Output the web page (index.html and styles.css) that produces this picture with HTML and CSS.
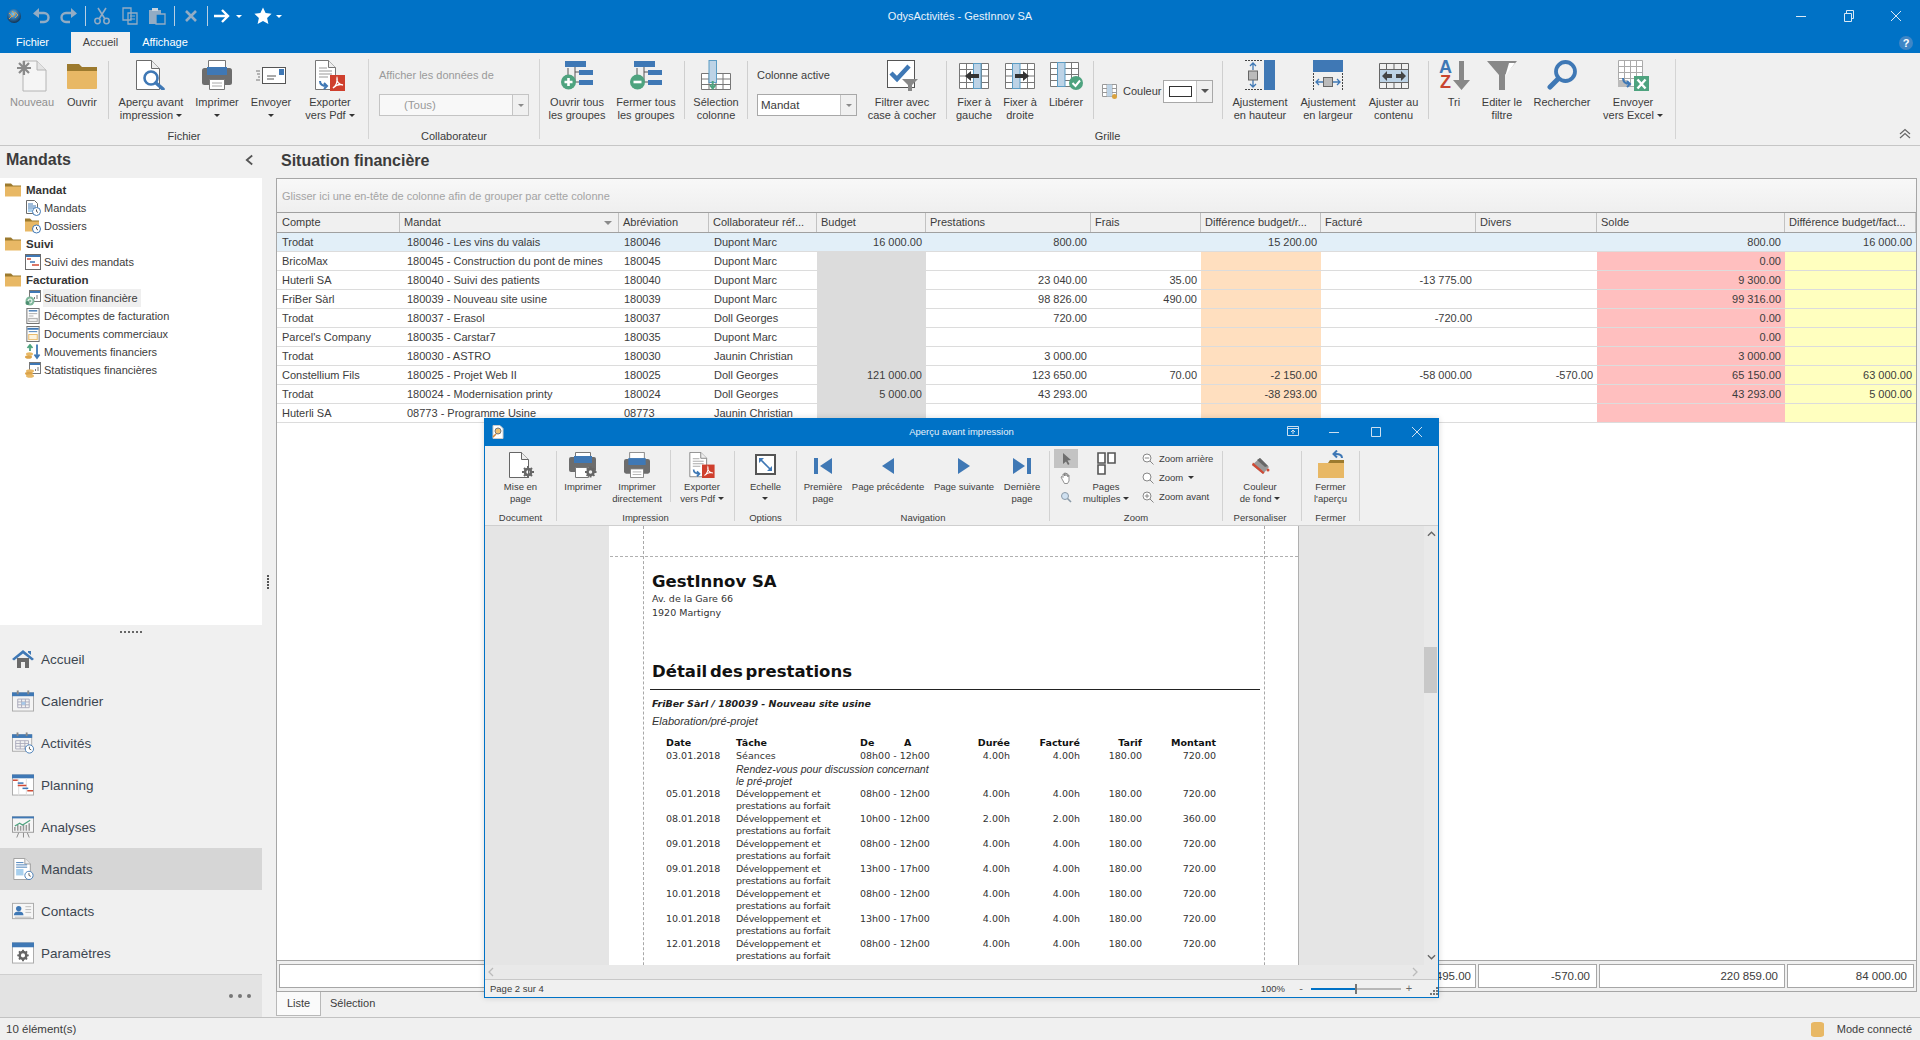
FILE: index.html
```html
<!DOCTYPE html>
<html lang="fr">
<head>
<meta charset="utf-8">
<title>OdysActivités - GestInnov SA</title>
<link rel="stylesheet" href="styles.css">
</head>
<body>
<svg class="sprite" xmlns="http://www.w3.org/2000/svg">
  <defs>
    <radialGradient id="globe" cx="45%" cy="35%" r="65%"><stop offset="0" stop-color="#7fc7ee"/><stop offset=".55" stop-color="#2a6fa8"/><stop offset="1" stop-color="#16324f"/></radialGradient>
  </defs>
  <symbol id="new" viewBox="0 0 30 32"><path d="M6 8V1h14l9 9v21H6z" fill="#f5f5f5" stroke="#b4b4b4"/><path d="M20 1v9h9" fill="#e4e4e4" stroke="#b4b4b4"/><path d="M7 1v14M0 8h14M2 3l10 10M12 3L2 13" stroke="#8a8a8a" stroke-width="2.2"/></symbol>
  <symbol id="folder" viewBox="0 0 30 26"><path d="M0 1h12l3 3h15v7H0z" fill="#9c7a2e"/><path d="M0 8h30v17a1 1 0 0 1-1 1H1a1 1 0 0 1-1-1z" fill="#e8b865"/></symbol>
  <symbol id="preview" viewBox="0 0 30 30"><path d="M.5.5h15l8 8v21H.5z" fill="#fff" stroke="#6b6b6b"/><path d="M15.5.5v8h8" fill="#eee" stroke="#6b6b6b"/><circle cx="15" cy="18" r="6.5" fill="#fff" stroke="#3f78b5" stroke-width="2.6"/><path d="M20 23l7 6" stroke="#3f78b5" stroke-width="3.6" stroke-linecap="round"/></symbol>
  <symbol id="printer" viewBox="0 0 30 30"><path d="M6.500.500h17v8h-17z" fill="#fff" stroke="#777"/><rect y="8" width="30" height="17" rx="2.500" fill="#6d6d6d"/><rect x="5" y="7" width="20" height="8" fill="#3f78b5"/><path d="M7.500 19.500h15v10h-15z" fill="#fff" stroke="#777"/><path d="M10 23h10M10 26h10" stroke="#aaa"/></symbol>
  <symbol id="send" viewBox="0 0 30 18"><path d="M0 4h4M1 7h3M2 10h2M0 13h4" stroke="#777"/><rect x="6.500" y=".5" width="23" height="16" fill="#fff" stroke="#555"/><rect x="23" y="2" width="5" height="6" fill="#3f78b5"/><path d="M11 9h9M11 12h7" stroke="#555"/></symbol>
  <symbol id="pdf" viewBox="0 0 30 31"><path d="M.5.5h13l7 7v22H.5z" fill="#fff" stroke="#777"/><path d="M13.500.5v7h7" fill="#eee" stroke="#777"/><path d="M4 8h8M4 11h13M4 14h13M4 17h9" stroke="#999"/><rect x="15" y="15" width="15" height="16" fill="#cf3f2d"/><path d="M18 28c3-2 5-7 4-10-1 3 2 7 6 7-3-1-7 0-10 3z" fill="none" stroke="#fff" stroke-width="1.300"/><path d="M5 21c0 4 3 5 7 5m-3-3l3 3-3 3" fill="none" stroke="#3f78b5" stroke-width="2"/></symbol>
  <symbol id="openall" viewBox="0 0 32 30"><path d="M7 8v8M14 6v16M14 12h4M14 22h4" stroke="#555" fill="none"/><rect x="4" y="1" width="21" height="6" fill="#3f78b5"/><rect x="18" y="10" width="14" height="5" fill="#3f78b5"/><rect x="18" y="20" width="14" height="5" fill="#3f78b5"/><circle cx="7.500" cy="22" r="7.500" fill="#4ea37f"/><path d="M7.500 18v8M3.500 22h8" stroke="#fff" stroke-width="2.600"/></symbol>
  <symbol id="closeall" viewBox="0 0 32 30"><path d="M7 8v8M14 6v16M14 12h4M14 22h4" stroke="#555" fill="none"/><rect x="4" y="1" width="21" height="6" fill="#3f78b5"/><rect x="18" y="10" width="14" height="5" fill="#3f78b5"/><rect x="18" y="20" width="14" height="5" fill="#3f78b5"/><circle cx="7.500" cy="22" r="7.500" fill="#4ea37f"/><path d="M3.500 22h8" stroke="#fff" stroke-width="2.600"/></symbol>
  <symbol id="selcol" viewBox="0 0 30 30"><path d="M.5 13.500h29v16H.5zM.5 19h29M.5 24.500h29M8 13.500v16M15 13.500v16M22 13.500v16" fill="#fff" stroke="#777"/><rect x="8" y=".5" width="7.500" height="22" fill="#bdd3e6" stroke="#5b9cc4"/><path d="M11.700 21v7M9 25l2.700 3.500L14.500 25" stroke="#4ea37f" stroke-width="2" fill="none"/></symbol>
  <symbol id="filtercheck" viewBox="0 0 31 31"><rect x=".5" y=".5" width="27" height="27" fill="#fff" stroke="#555"/><path d="M4 13l6 6L22 6" fill="none" stroke="#3f78b5" stroke-width="4.500"/><path d="M15 19h16l-6 6v6h-4v-6z" fill="#888"/></symbol>
  <symbol id="fixl" viewBox="0 0 30 26"><path d="M.5.5h29v25H.5zM.5 6.500h29M.5 13h29M.5 19.500h29M7.500.5v25M22.500.5v25" fill="#fff" stroke="#777"/><rect x="14.500" y=".5" width="7.500" height="25" fill="#bdd3e6" stroke="#5b9cc4"/><path d="M6 13l6-5v3h8v4h-8v3z" fill="#333"/></symbol>
  <symbol id="fixr" viewBox="0 0 30 26"><path d="M.5.5h29v25H.5zM.5 6.500h29M.5 13h29M.5 19.500h29M7.500.5v25M22.500.5v25" fill="#fff" stroke="#777"/><rect x="7.500" y=".5" width="7.500" height="25" fill="#bdd3e6" stroke="#5b9cc4"/><path d="M24 13l-6-5v3h-8v4h8v3z" fill="#333"/></symbol>
  <symbol id="free" viewBox="0 0 33 28"><path d="M.5.5h28v24H.5zM.5 6.500h28M.5 12.500h28M.5 18.500h28M7.500.5v24M21.500.5v24" fill="#fff" stroke="#777"/><rect x="7.500" y=".5" width="7.500" height="24" fill="#bdd3e6" stroke="#5b9cc4"/><circle cx="26" cy="21" r="7" fill="#4ea37f"/><path d="M22.500 21l3 3 4.500-5.500" fill="none" stroke="#fff" stroke-width="2"/></symbol>
  <symbol id="gridcolor" viewBox="0 0 16 15"><path d="M.5.5h14v12H.5zM.5 4.500h14M.5 8.500h14M5 .5v12M10 .5v12" fill="#fff" stroke="#999"/><rect x="5" y=".5" width="5" height="12" fill="#bdd3e6"/><circle cx="12.500" cy="12.500" r="2.500" fill="#d9a23f"/></symbol>
  <symbol id="fith" viewBox="0 0 30 30"><path d="M0 .5h18M0 29.500h18" stroke="#444" stroke-dasharray="2 1"/><path d="M8 3v7M5 6l3-3 3 3M8 20v7M5 24l3 3 3-3" stroke="#3f78b5" fill="none" stroke-width="1.300"/><rect x="3.500" y="11" width="9" height="9" fill="#bbb" stroke="#666"/><rect x="19" width="11" height="30" fill="#3f78b5"/></symbol>
  <symbol id="fitw" viewBox="0 0 30 30"><rect width="30" height="12" fill="#3f78b5"/><path d="M.5 13v17M29.500 13v17" stroke="#444" stroke-dasharray="2 1"/><path d="M3 22h7M6 19l-3 3 3 3M20 22h7M24 19l3 3-3 3" stroke="#3f78b5" fill="none" stroke-width="1.300"/><rect x="10.500" y="17.500" width="9" height="9" fill="#bbb" stroke="#666"/></symbol>
  <symbol id="fitc" viewBox="0 0 30 26"><rect y="6" width="30" height="14" fill="#bdd3e6"/><path d="M.5.5h29v25H.5zM.5 6.500h29M.5 19.500h29M7.500.5v6M15 .5v6M22.500.5v6M7.500 19.500v6M15 19.500v6M22.500 19.500v6" fill="none" stroke="#666"/><path d="M3 13l5-5v3h5v4H8v3zM27 13l-5-5v3h-5v4h5v3z" fill="#444"/></symbol>
  <symbol id="sortarrow" viewBox="0 0 17 31"><path d="M6 1h5v19h6L8.500 30 0 20h6z" fill="#888"/></symbol>
  <symbol id="funnel" viewBox="0 0 30 30"><path d="M0 1h30L18 15v15h-6V15z" fill="#888"/><path d="M19 15L28 3h-6l-3.500 12z" fill="#fff"/></symbol>
  <symbol id="search" viewBox="0 0 30 30"><circle cx="18.500" cy="11.500" r="9.500" fill="none" stroke="#3f78b5" stroke-width="3.800"/><path d="M11 19L3 27" stroke="#3f78b5" stroke-width="5" stroke-linecap="round"/></symbol>
  <symbol id="excel" viewBox="0 0 31 31"><path d="M.5.5h24v26H.5zM.5 6.500h24M.5 12.500h24M.5 18.500h24M6.500.5v26M12.500.5v26M18.500.5v26" fill="#fff" stroke="#aaa"/><rect y="20" width="9" height="7" fill="#bbb"/><rect x="16" y="16" width="15" height="15" fill="#4ea37f"/><path d="M19.500 19.500l8 9M27.500 19.500l-8 9" stroke="#fff" stroke-width="2.400"/><path d="M5 18c0 4 2 6 7 6m-3-3l3 3-3 3" fill="none" stroke="#3f78b5" stroke-width="2"/></symbol>
  <symbol id="logo" viewBox="0 0 16 16"><circle cx="8" cy="8" r="7" fill="url(#globe)"/><path d="M3 5l3 3-3 3M6 3l3 3-3 3M9 4l3 3-3 3" fill="none" stroke="#e8a04a" stroke-width=".9"/></symbol>
  <symbol id="undo" viewBox="0 0 18 18"><path d="M5 6h7a4 4 0 0 1 0 9H8" fill="none" stroke="currentColor" stroke-width="2.400"/><path d="M7 1L1 6.500 7 11z" fill="currentColor"/></symbol>
  <symbol id="redo" viewBox="0 0 18 18"><path d="M13 6H6a4 4 0 0 0 0 9h4" fill="none" stroke="currentColor" stroke-width="2.400"/><path d="M11 1l6 5.500L11 11z" fill="currentColor"/></symbol>
  <symbol id="cut" viewBox="0 0 18 18"><path d="M5 1l7 11M13 1L6 12" stroke="currentColor" stroke-width="1.600"/><circle cx="4.500" cy="14" r="2.700" fill="none" stroke="currentColor" stroke-width="1.500"/><circle cx="13.500" cy="14" r="2.700" fill="none" stroke="currentColor" stroke-width="1.500"/></symbol>
  <symbol id="copy" viewBox="0 0 18 18"><path d="M2 1h8v12H2zM7 6h9v11H7z" fill="#0072c6" stroke="currentColor" stroke-width="1.300"/><path d="M9 9h5M9 12h5" stroke="currentColor"/></symbol>
  <symbol id="paste" viewBox="0 0 18 18"><path d="M1 3h12v14H1z" fill="currentColor"/><path d="M4 1h6v3H4z" fill="#c7d3de"/><path d="M8 7h9v10H8z" fill="#0072c6" stroke="currentColor" stroke-width="1.300"/></symbol>
  <symbol id="del" viewBox="0 0 18 18"><path d="M4 4l10 10M14 4L4 14" stroke="currentColor" stroke-width="2.600"/></symbol>
  <symbol id="arrow" viewBox="0 0 18 18"><path d="M1 9h13M9 3l6 6-6 6" fill="none" stroke="currentColor" stroke-width="2.400"/></symbol>
  <symbol id="star" viewBox="0 0 18 18"><path d="M9 .5l2.600 5.600 6 .7-4.500 4.100 1.300 6L9 13.900 3.600 16.900l1.300-6L.4 6.800l6-.7z" fill="currentColor"/></symbol>
  <symbol id="restore" viewBox="0 0 12 12"><path d="M1.500 3.500h7v8h-7zM3.500 3.500v-3h7v8h-2" fill="none" stroke="currentColor"/></symbol>
  <symbol id="closex" viewBox="0 0 12 12"><path d="M1 1l10 10M11 1L1 11" stroke="currentColor"/></symbol>
  <symbol id="minus" viewBox="0 0 12 12"><path d="M1 6.500h10" stroke="currentColor"/></symbol>
  <symbol id="maxi" viewBox="0 0 12 12"><path d="M1.500 1.500h9v9h-9z" fill="none" stroke="currentColor"/></symbol>
  <symbol id="pin" viewBox="0 0 12 10"><path d="M.5 .5h11v9H.5zM.5 2.500h11" fill="none" stroke="currentColor"/><path d="M6 8V4M4 6l2-2 2 2" fill="none" stroke="currentColor"/></symbol>
  <symbol id="home" viewBox="0 0 22 20"><path d="M5 9h12v10h-4v-6H9v6H5z" fill="#6a6a6a"/><path d="M0 10L11 1l11 9-2 1.500L11 4.500 2 11.500z" fill="#3f78b5"/><path d="M16 2h3v4l-3-2.500z" fill="#3f78b5"/></symbol>
  <symbol id="cal" viewBox="0 0 23 22"><rect x=".5" y="2.500" width="22" height="19" fill="#f4f4f4" stroke="#aaa"/><rect y="2" width="23" height="4" fill="#3f78b5"/><rect x="5" y="0" width="2" height="4" fill="#888"/><rect x="16" y="0" width="2" height="4" fill="#888"/><path d="M6 9h12v9H6zM6 12h12M6 15h12M10 9v9M14 9v9" fill="none" stroke="#aab"/><rect x="10" y="12" width="4" height="3" fill="#a8c8e8"/></symbol>
  <symbol id="calclock" viewBox="0 0 24 23"><rect x=".5" y="2.500" width="21" height="18" fill="#f4f4f4" stroke="#aaa"/><rect y="2" width="22" height="4" fill="#3f78b5"/><rect x="5" y="0" width="2" height="4" fill="#888"/><rect x="15" y="0" width="2" height="4" fill="#888"/><path d="M4 9h14v9H4zM4 12h14M4 15h14M9 9v9M14 9v9" fill="none" stroke="#aab"/><circle cx="19" cy="18" r="4.500" fill="#fff" stroke="#3f78b5"/><path d="M19 15.500V18l2 1" fill="none" stroke="#555"/></symbol>
  <symbol id="plan" viewBox="0 0 23 22"><rect x=".5" y=".5" width="22" height="21" fill="#fff" stroke="#aaa"/><rect width="23" height="4" fill="#3f78b5"/><path d="M7 4v18M15 4v18" stroke="#ddd"/><path d="M1 6h5" stroke="#d04a35" stroke-width="1.600"/><path d="M6 9h6" stroke="#3f78b5" stroke-width="1.600"/><path d="M6 11.500h9" stroke="#d04a35" stroke-width="1.600"/><path d="M11 14.500h6" stroke="#3f78b5" stroke-width="1.600"/><path d="M16 17h6" stroke="#d04a35" stroke-width="1.600"/></symbol>
  <symbol id="chart" viewBox="0 0 23 22"><rect x=".5" y=".5" width="22" height="16" fill="#f6f6f6" stroke="#999"/><rect width="23" height="2" fill="#3f78b5"/><path d="M3 15v-4M6 15V9M9 15V10M12 15V8M15 15V9M18 15V7" stroke="#999" stroke-width="1.600"/><path d="M3 10l5-3 3 2 8-5" fill="none" stroke="#4ea37f" stroke-width="1.300"/><path d="M7 17l-2 5M12 17v5M16 17l2 5" stroke="#888"/></symbol>
  <symbol id="mand" viewBox="0 0 23 24"><path d="M1.500 .5h12l6 6v17h-18z" fill="#fff" stroke="#999"/><path d="M13.500.5v6h6" fill="#eee" stroke="#999"/><path d="M4 5h8M4 7.500h12M4 10h12" stroke="#3f78b5"/><rect x="4" y="12" width="8" height="7" fill="#a8d0ee"/><circle cx="18" cy="19" r="4.500" fill="#fff" stroke="#3f78b5"/><path d="M18 16.500V19l2 1" fill="none" stroke="#555"/></symbol>
  <symbol id="cont" viewBox="0 0 23 17"><rect x=".5" y=".5" width="22" height="16" fill="#f6f6f6" stroke="#aaa"/><circle cx="7" cy="6" r="2.800" fill="#3f78b5"/><path d="M2 13c0-3 2-4 5-4s5 1 5 4z" fill="#3f78b5"/><path d="M14 4h6M14 7h6M14 10h6M3 15h17" stroke="#bbb"/></symbol>
  <symbol id="gear" viewBox="0 0 23 22"><rect x=".5" y=".5" width="22" height="21" fill="#fff" stroke="#aaa"/><rect width="23" height="5" fill="#3f78b5"/><circle cx="11.500" cy="13.500" r="3.500" fill="none" stroke="#666" stroke-width="2.600"/><path d="M11.500 7.500v3M11.500 16.500v3M5.500 13.500h3M14.500 13.500h3M7.300 9.300l2 2M13.700 15.700l2 2M15.700 9.300l-2 2M9.300 15.700l-2 2" stroke="#666" stroke-width="2"/></symbol>
  <symbol id="tfold" viewBox="0 0 16 13"><path d="M0 0h6l2 2h8v3H0z" fill="#9c7a2e"/><path d="M0 3h16v10H0z" fill="#e8b865"/></symbol>
  <symbol id="tfoldc" viewBox="0 0 16 15"><path d="M0 0h5l2 2h7v3H0z" fill="#9c7a2e"/><path d="M0 3h14v10H0z" fill="#e8b865"/><circle cx="11.500" cy="10.500" r="4" fill="#fff" stroke="#3f78b5"/><path d="M11.500 8.500v2l1.500 1" fill="none" stroke="#555"/></symbol>
  <symbol id="tmand" viewBox="0 0 16 16"><path d="M1.500 .5h8l3 3v10h-11z" fill="#fff" stroke="#6b6b6b"/><path d="M3 4h5M3 6h8M3 8h8" stroke="#3f78b5"/><rect x="3" y="9" width="4" height="3" fill="#a8d0ee"/><circle cx="11.500" cy="11.500" r="4" fill="#fff" stroke="#3f78b5"/><path d="M11.500 9.500v2l1.500 1" fill="none" stroke="#555"/></symbol>
  <symbol id="tsuivi" viewBox="0 0 16 16"><rect x=".5" y=".5" width="15" height="15" fill="#fff" stroke="#6b6b6b"/><rect x="1" y="1" width="14" height="2" fill="#3f78b5"/><path d="M2 5h4" stroke="#d04a35" stroke-width="1.500"/><path d="M5 8h5" stroke="#3f78b5" stroke-width="1.500"/><path d="M7 11h7" stroke="#d04a35" stroke-width="1.500"/></symbol>
  <symbol id="tsit" viewBox="0 0 16 16"><rect x="4.500" y=".5" width="11" height="11" fill="#fff" stroke="#777"/><rect x="5" y="1" width="10" height="2" fill="#3f78b5"/><path d="M12 9V5M9.500 9V7" stroke="#777"/><circle cx="5" cy="11" r="4.500" fill="#7fb89c"/><circle cx="5" cy="11" r="2" fill="none" stroke="#fff"/><circle cx="2.500" cy="13" r="2" fill="#4e8f72"/></symbol>
  <symbol id="tdec" viewBox="0 0 16 17"><rect x="1.500" y=".5" width="13" height="16" fill="#fff" stroke="#6b6b6b"/><path d="M3.500 3h9" stroke="#3f78b5" stroke-width="1.500"/><path d="M3.500 6h9M3.500 8.500h5" stroke="#aaa"/><rect x="3.500" y="11" width="9" height="3.500" fill="#eee" stroke="#aaa"/></symbol>
  <symbol id="tdoc" viewBox="0 0 16 17"><rect x="1.500" y=".5" width="13" height="16" fill="#fff" stroke="#6b6b6b"/><rect x="2" y="2" width="12" height="2" fill="#3f78b5"/><path d="M3.500 6h9" stroke="#3f78b5"/><rect x="3.500" y="9" width="9" height="5.500" fill="#fdf3de" stroke="#e8b865"/></symbol>
  <symbol id="tmouv" viewBox="0 0 16 16"><path d="M5 7V2M2.500 4L5 1l2.500 3" fill="none" stroke="#4ea37f" stroke-width="1.800"/><path d="M12 .5V13M9.500 10.500L12 14l2.500-3.500" fill="none" stroke="#3f78b5" stroke-width="1.800"/><ellipse cx="4.500" cy="10" rx="3.500" ry="1.800" fill="#e8b865"/><ellipse cx="3.500" cy="13" rx="3.500" ry="1.800" fill="#dca44a"/></symbol>
  <symbol id="tstat" viewBox="0 0 16 16"><rect x="4.500" y=".5" width="11" height="11" fill="#fff" stroke="#777"/><rect x="5" y="1" width="10" height="2" fill="#3f78b5"/><path d="M13 9V5M10.500 9V7" stroke="#777"/><ellipse cx="5" cy="9" rx="4" ry="1.800" fill="#e8b865"/><ellipse cx="4" cy="11.500" rx="4" ry="1.800" fill="#dca44a"/><ellipse cx="5" cy="14" rx="4" ry="1.800" fill="#e8b865"/></symbol>
  <symbol id="pagesetup" viewBox="0 0 26 26"><path d="M1.500 .5h12l7 7v18h-19z" fill="#fff" stroke="#666"/><path d="M13.500 .5v7h7" fill="#eee" stroke="#666"/><circle cx="20" cy="20" r="3" fill="none" stroke="#666" stroke-width="2.600"/><path d="M20 14v3M20 23v3M14 20h3M23 20h3M16 16l2 2M22 22l2 2M24 16l-2 2M18 22l-2 2" stroke="#666" stroke-width="2"/></symbol>
  <symbol id="printgear" viewBox="0 0 28 26"><path d="M6.500 .5h15v6h-15z" fill="#fff" stroke="#777"/><rect y="5" width="27" height="15" rx="2" fill="#6d6d6d"/><rect x="5" y="4" width="18" height="7" fill="#3f78b5"/><path d="M6.500 15.500h13v10h-13z" fill="#fff" stroke="#777"/><circle cx="21.500" cy="20" r="3" fill="#f0f0f0" stroke="#666" stroke-width="2.500"/><path d="M21.500 14.500v2.500M21.500 23v2.500M16 20h2.500M25 20h2.500M17.800 16.300l1.800 1.800M23.600 22.100l1.800 1.800M25.200 16.300l-1.800 1.800M19.400 22.100l-1.800 1.800" stroke="#666" stroke-width="2"/></symbol>
  <symbol id="scale" viewBox="0 0 21 21"><rect x="1" y="1" width="19" height="19" fill="#fff" stroke="#555" stroke-width="2"/><path d="M5 5l11 11" stroke="#3f78b5" stroke-width="1.600"/><path d="M4 9V4h5zM17 12v5h-5z" fill="#3f78b5"/></symbol>
  <symbol id="first" viewBox="0 0 18 16"><rect width="4" height="16" fill="#3f78b5"/><path d="M18 0v16L6 8z" fill="#3f78b5"/></symbol>
  <symbol id="prev" viewBox="0 0 12 16"><path d="M12 0v16L0 8z" fill="#3f78b5"/></symbol>
  <symbol id="next" viewBox="0 0 12 16"><path d="M0 0v16l12-8z" fill="#3f78b5"/></symbol>
  <symbol id="last" viewBox="0 0 18 16"><rect x="14" width="4" height="16" fill="#3f78b5"/><path d="M0 0v16l12-8z" fill="#3f78b5"/></symbol>
  <symbol id="cursor" viewBox="0 0 12 12"><path d="M3 0v11l3-2.500 2 3.500 1.500-1L7.500 7.500 11 7z" fill="#6e6e6e"/></symbol>
  <symbol id="hand" viewBox="0 0 12 12"><path d="M2 7L1 5l1-.5 1 1V2l1 0 .5 2V1l1.200 0 .3 3V1.500h1.200L8 5V3l1 0v6l-1.500 2.500h-3z" fill="#fff" stroke="#777" stroke-width=".8"/></symbol>
  <symbol id="mag" viewBox="0 0 12 12"><circle cx="5" cy="5" r="3.500" fill="#cfe0f0" stroke="#8a9aa8"/><path d="M7.500 7.500L11 11" stroke="#8a9aa8" stroke-width="1.600"/></symbol>
  <symbol id="pages" viewBox="0 0 19 23"><path d="M1 1h7v10H1zM11 1h7v10h-7zM1 13h7v9H1z" fill="#fff" stroke="#555" stroke-width="1.600"/></symbol>
  <symbol id="zout" viewBox="0 0 12 12"><circle cx="5" cy="5" r="4" fill="#fff" stroke="#888"/><path d="M2.800 5h4.400M8 8l3.500 3.500" stroke="#888"/></symbol>
  <symbol id="zo" viewBox="0 0 12 12"><circle cx="5" cy="5" r="4" fill="#fff" stroke="#888"/><path d="M8 8l3.500 3.500" stroke="#888"/></symbol>
  <symbol id="zin" viewBox="0 0 12 12"><circle cx="5" cy="5" r="4" fill="#fff" stroke="#888"/><path d="M2.800 5h4.400M5 2.800v4.400M8 8l3.500 3.500" stroke="#888"/></symbol>
  <symbol id="bucket" viewBox="0 0 20 18"><path d="M10 1l9 9-6 7-11-9z" fill="#999"/><path d="M2 8l11 9 1.500-1.500L3 5.500z" fill="#d04a35"/><path d="M10 1l8 8-3 1-8-7z" fill="#666"/><circle cx="18" cy="13" r="1.500" fill="#d04a35"/></symbol>
  <symbol id="closeprev" viewBox="0 0 26 28"><path d="M0 13h10l2-3h14v4H0z" fill="#9c7a2e"/><path d="M0 13h26v15H0z" fill="#e8b865"/><path d="M24 8c0-3-3-4-6-4h-2M19 .5L15.500 4l3.500 3.500" fill="none" stroke="#3f78b5" stroke-width="2"/></symbol>
  <symbol id="dlgicon" viewBox="0 0 12 14"><path d="M1 .5h7l3 3v10H1z" fill="#fff" stroke="#ccc"/><circle cx="6" cy="6" r="3" fill="#f0c070" stroke="#777"/><path d="M4 9l-3 3" stroke="#d88a3a" stroke-width="1.600"/></symbol>
  <symbol id="db" viewBox="0 0 13 15"><path d="M0 2c0-3 13-3 13 0v11c0 3-13 3-13 0z" fill="#e8b865"/></symbol>
</svg>

<div class="app">
  <header class="titlebar">
    <div class="qrow">
      <div class="qat">
        <span class="q w19"><svg class="s14"><use href="#logo"/></svg></span>
        <span class="q w28 ml4 dim"><svg class="s18"><use href="#undo"/></svg></span>
        <span class="q w28 dim"><svg class="s18"><use href="#redo"/></svg></span>
        <i class="qsep"></i>
        <span class="q w32 dim"><svg class="s18"><use href="#cut"/></svg></span>
        <span class="q w24 dim"><svg class="s18"><use href="#copy"/></svg></span>
        <span class="q w30 dim"><svg class="s18"><use href="#paste"/></svg></span>
        <i class="qsep"></i>
        <span class="q w32 dim"><svg class="s18"><use href="#del"/></svg></span>
        <i class="qsep flat"></i>
        <span class="q w28 lit"><svg class="s18"><use href="#arrow"/></svg></span>
        <i class="caret white"></i>
        <span class="q w26 ml8 lit"><svg class="s18"><use href="#star"/></svg></span>
        <i class="caret white"></i>
      </div>
      <div class="apptitle">OdysActivités - GestInnov SA</div>
      <div class="winbtns">
        <span class="wb"><svg class="s12"><use href="#minus"/></svg></span>
        <span class="wb"><svg class="s12"><use href="#restore"/></svg></span>
        <span class="wb"><svg class="s12"><use href="#closex"/></svg></span>
      </div>
    </div>
    <div class="tabs">
      <span class="tab t-file">Fichier</span>
      <span class="tab t-on">Accueil</span>
      <span class="tab t-view">Affichage</span>
      <span class="help">?</span>
    </div>
  </header>

  <section class="ribbon">
    <div class="group g368">
      <div class="gbody pl8">
        <div class="rb w48 off"><div class="ic"><svg class="i30x32"><use href="#new"/></svg></div><div class="lb">Nouveau</div></div>
        <div class="rb w52"><div class="ic"><svg class="i30x26 mt3"><use href="#folder"/></svg></div><div class="lb">Ouvrir</div></div>
        <i class="sep"></i>
        <div class="rb w84"><div class="ic"><svg class="i30"><use href="#preview"/></svg></div><div class="lb">Aperçu avant<br>impression <i class="caret"></i></div></div>
        <div class="rb w48"><div class="ic"><svg class="i30"><use href="#printer"/></svg></div><div class="lb">Imprimer<br><i class="caret"></i></div></div>
        <div class="rb w60"><div class="ic"><svg class="i30x18 mt7"><use href="#send"/></svg></div><div class="lb">Envoyer<br><i class="caret"></i></div></div>
        <div class="rb w58"><div class="ic"><svg class="i30x31"><use href="#pdf"/></svg></div><div class="lb">Exporter<br>vers Pdf <i class="caret"></i></div></div>
      </div>
      <div class="glabel">Fichier</div>
    </div>
    <i class="gsep"></i>
    <div class="group g170">
      <div class="gbody col pad10">
        <div class="muted fieldcap">Afficher les données de</div>
        <div class="combo cb150 dis"><span class="cbtxt ind">(Tous)</span><span class="cbbtn"><i class="caret gray"></i></span></div>
      </div>
      <div class="glabel">Collaborateur</div>
    </div>
    <i class="gsep"></i>
    <div class="group g1135">
      <div class="gbody">
        <div class="rb w74"><div class="ic"><svg class="i32x30"><use href="#openall"/></svg></div><div class="lb">Ouvrir tous<br>les groupes</div></div>
        <div class="rb w64"><div class="ic"><svg class="i32x30"><use href="#closeall"/></svg></div><div class="lb">Fermer tous<br>les groupes</div></div>
        <i class="sep ml6"></i>
        <div class="rb w62"><div class="ic"><svg class="i30"><use href="#selcol"/></svg></div><div class="lb">Sélection<br>colonne</div></div>
        <i class="sep"></i>
        <div class="col w110 pad9">
          <div class="fieldcap">Colonne active</div>
          <div class="combo cb100"><span class="cbtxt">Mandat</span><span class="cbbtn"><i class="caret gray"></i></span></div>
        </div>
        <div class="rb w88"><div class="ic"><svg class="i31"><use href="#filtercheck"/></svg></div><div class="lb">Filtrer avec<br>case à cocher</div></div>
        <i class="sep"></i>
        <div class="rb w54"><div class="ic"><svg class="i30x26 mt3"><use href="#fixl"/></svg></div><div class="lb">Fixer à<br>gauche</div></div>
        <div class="rb w38"><div class="ic"><svg class="i30x26 mt3"><use href="#fixr"/></svg></div><div class="lb">Fixer à<br>droite</div></div>
        <div class="rb w54"><div class="ic"><svg class="i33x28 mt2"><use href="#free"/></svg></div><div class="lb">Libérer</div></div>
        <i class="sep"></i>
        <div class="colorbox w128">
          <svg class="i16x15"><use href="#gridcolor"/></svg>
          <span class="colorlb">Couleur</span>
          <span class="combo cbcol"><span class="swatch"><i></i></span><span class="cbbtn"><i class="caret dark"></i></span></span>
        </div>
        <i class="sep"></i>
        <div class="rb w74"><div class="ic"><svg class="i30"><use href="#fith"/></svg></div><div class="lb">Ajustement<br>en hauteur</div></div>
        <div class="rb w62"><div class="ic"><svg class="i30"><use href="#fitw"/></svg></div><div class="lb">Ajustement<br>en largeur</div></div>
        <div class="rb w69"><div class="ic"><svg class="i30x26 mt3"><use href="#fitc"/></svg></div><div class="lb">Ajuster au<br>contenu</div></div>
        <i class="sep"></i>
        <div class="rb w50"><div class="ic az"><span class="azl"><b class="az-a">A</b><b class="az-z">Z</b></span><svg class="i17x31"><use href="#sortarrow"/></svg></div><div class="lb">Tri</div></div>
        <div class="rb w46"><div class="ic"><svg class="i30"><use href="#funnel"/></svg></div><div class="lb">Editer le<br>filtre</div></div>
        <div class="rb w74"><div class="ic"><svg class="i30"><use href="#search"/></svg></div><div class="lb">Rechercher</div></div>
        <div class="rb w68"><div class="ic"><svg class="i31"><use href="#excel"/></svg></div><div class="lb">Envoyer<br>vers Excel <i class="caret"></i></div></div>
      </div>
      <div class="glabel">Grille</div>
    </div>
    <i class="gsep"></i>
    <div class="collapse"><svg class="s12" viewBox="0 0 12 12"><path d="M1 6l5-4.500L11 6M1 10l5-4.500L11 10" fill="none" stroke="#666" stroke-width="1.200"/></svg></div>
  </section>

  <main class="main">
    <aside class="left">
      <div class="paneltitle lefthead"><span>Mandats</span><svg class="chev" viewBox="0 0 10 12"><path d="M8 1L2 6l6 5" fill="none" stroke="#555" stroke-width="2"/></svg></div>
      <nav class="tree">
        <div class="tg"><svg class="t16"><use href="#tfold"/></svg>Mandat</div>
        <div class="ti"><svg class="t16"><use href="#tmand"/></svg><span>Mandats</span></div>
        <div class="ti"><svg class="t16"><use href="#tfoldc"/></svg><span>Dossiers</span></div>
        <div class="tg"><svg class="t16"><use href="#tfold"/></svg>Suivi</div>
        <div class="ti"><svg class="t16"><use href="#tsuivi"/></svg><span>Suivi des mandats</span></div>
        <div class="tg"><svg class="t16"><use href="#tfold"/></svg>Facturation</div>
        <div class="ti sel"><svg class="t16"><use href="#tsit"/></svg><span>Situation financière</span></div>
        <div class="ti"><svg class="t16"><use href="#tdec"/></svg><span>Décomptes de facturation</span></div>
        <div class="ti"><svg class="t16"><use href="#tdoc"/></svg><span>Documents commerciaux</span></div>
        <div class="ti"><svg class="t16"><use href="#tmouv"/></svg><span>Mouvements financiers</span></div>
        <div class="ti"><svg class="t16"><use href="#tstat"/></svg><span>Statistiques financières</span></div>
      </nav>
      <div class="grip"><i></i><i></i><i></i><i></i><i></i><i></i></div>
      <div class="navitem"><svg class="n22"><use href="#home"/></svg><span>Accueil</span></div>
      <div class="navitem"><svg class="n22"><use href="#cal"/></svg><span>Calendrier</span></div>
      <div class="navitem"><svg class="n22"><use href="#calclock"/></svg><span>Activités</span></div>
      <div class="navitem"><svg class="n22"><use href="#plan"/></svg><span>Planning</span></div>
      <div class="navitem"><svg class="n22"><use href="#chart"/></svg><span>Analyses</span></div>
      <div class="navitem on"><svg class="n22"><use href="#mand"/></svg><span>Mandats</span></div>
      <div class="navitem"><svg class="n22"><use href="#cont"/></svg><span>Contacts</span></div>
      <div class="navitem"><svg class="n22"><use href="#gear"/></svg><span>Paramètres</span></div>
      <div class="navmore"><i></i><i></i><i></i></div>
    </aside>
    <div class="split"><i></i><i></i><i></i><i></i><i></i></div>
    <section class="content">
      <div class="paneltitle"><span>Situation financière</span></div>
      <div class="panel">
        <div class="grouppane">Glisser ici une en-tête de colonne afin de grouper par cette colonne</div>
        <div class="row head">
          <span class="c first">Compte</span><span class="c sorted">Mandat<i class="caret gray big"></i></span><span class="c">Abréviation</span><span class="c">Collaborateur réf...</span><span class="c">Budget</span><span class="c">Prestations</span><span class="c">Frais</span><span class="c">Différence budget/r...</span><span class="c">Facturé</span><span class="c">Divers</span><span class="c">Solde</span><span class="c">Différence budget/fact...</span>
        </div>
        <div class="rows">
          <div class="row r selrow"><span class="t">Trodat</span><span class="t m">180046 - Les vins du valais</span><span class="t">180046</span><span class="t">Dupont Marc</span><span class="n">16 000.00</span><span class="n">800.00</span><span class="n"></span><span class="n">15 200.00</span><span class="n"></span><span class="n"></span><span class="n">800.00</span><span class="n">16 000.00</span></div>
          <div class="row r"><span class="t">BricoMax</span><span class="t m">180045 - Construction du pont de mines</span><span class="t">180045</span><span class="t">Dupont Marc</span><span class="n bg"></span><span class="n"></span><span class="n"></span><span class="n ob"></span><span class="n"></span><span class="n"></span><span class="n rd">0.00</span><span class="n yl"></span></div>
          <div class="row r"><span class="t">Huterli SA</span><span class="t m">180040 - Suivi des patients</span><span class="t">180040</span><span class="t">Dupont Marc</span><span class="n bg"></span><span class="n">23 040.00</span><span class="n">35.00</span><span class="n ob"></span><span class="n">-13 775.00</span><span class="n"></span><span class="n rd">9 300.00</span><span class="n yl"></span></div>
          <div class="row r"><span class="t">FriBer Sàrl</span><span class="t m">180039 - Nouveau site usine</span><span class="t">180039</span><span class="t">Dupont Marc</span><span class="n bg"></span><span class="n">98 826.00</span><span class="n">490.00</span><span class="n ob"></span><span class="n"></span><span class="n"></span><span class="n rd">99 316.00</span><span class="n yl"></span></div>
          <div class="row r"><span class="t">Trodat</span><span class="t m">180037 - Erasol</span><span class="t">180037</span><span class="t">Doll Georges</span><span class="n bg"></span><span class="n">720.00</span><span class="n"></span><span class="n ob"></span><span class="n">-720.00</span><span class="n"></span><span class="n rd">0.00</span><span class="n yl"></span></div>
          <div class="row r"><span class="t">Parcel's Company</span><span class="t m">180035 - Carstar7</span><span class="t">180035</span><span class="t">Dupont Marc</span><span class="n bg"></span><span class="n"></span><span class="n"></span><span class="n ob"></span><span class="n"></span><span class="n"></span><span class="n rd">0.00</span><span class="n yl"></span></div>
          <div class="row r"><span class="t">Trodat</span><span class="t m">180030 - ASTRO</span><span class="t">180030</span><span class="t">Jaunin Christian</span><span class="n bg"></span><span class="n">3 000.00</span><span class="n"></span><span class="n ob"></span><span class="n"></span><span class="n"></span><span class="n rd">3 000.00</span><span class="n yl"></span></div>
          <div class="row r"><span class="t">Constellium Fils</span><span class="t m">180025 - Projet Web II</span><span class="t">180025</span><span class="t">Doll Georges</span><span class="n bg">121 000.00</span><span class="n">123 650.00</span><span class="n">70.00</span><span class="n ob">-2 150.00</span><span class="n">-58 000.00</span><span class="n">-570.00</span><span class="n rd">65 150.00</span><span class="n yl">63 000.00</span></div>
          <div class="row r"><span class="t">Trodat</span><span class="t m">180024 - Modernisation printy</span><span class="t">180024</span><span class="t">Doll Georges</span><span class="n bg">5 000.00</span><span class="n">43 293.00</span><span class="n"></span><span class="n ob">-38 293.00</span><span class="n"></span><span class="n"></span><span class="n rd">43 293.00</span><span class="n yl">5 000.00</span></div>
          <div class="row r"><span class="t">Huterli SA</span><span class="t m">08773 - Programme Usine</span><span class="t">08773</span><span class="t">Jaunin Christian</span><span class="n bg"></span><span class="n"></span><span class="n"></span><span class="n ob"></span><span class="n"></span><span class="n"></span><span class="n rd"></span><span class="n yl"></span></div>
        </div>
        <div class="row foot">
          <span class="fc spanleft"></span><span class="fc tight">-72 495.00</span><span class="fc">-570.00</span><span class="fc">220 859.00</span><span class="fc lastf">84 000.00</span>
        </div>
      </div>
      <div class="bottomtabs"><span class="btab on">Liste</span><span class="btab">Sélection</span></div>
    </section>
  </main>

  <footer class="status">
    <span>10 élément(s)</span>
    <span class="connected"><svg class="db"><use href="#db"/></svg>Mode connecté</span>
  </footer>
</div>

<div class="dialog">
  <div class="dtitle">
    <div class="dtl"><svg class="dico"><use href="#dlgicon"/></svg></div>
    <div class="dname">Aperçu avant impression</div>
    <div class="dtr">
      <span class="dwb"><svg class="pinic"><use href="#pin"/></svg></span>
      <span class="dwb"><svg class="s12"><use href="#minus"/></svg></span>
      <span class="dwb"><svg class="s12"><use href="#maxi"/></svg></span>
      <span class="dwb"><svg class="s12"><use href="#closex"/></svg></span>
    </div>
  </div>
  <div class="dribbon">
    <div class="dg d71"><div class="dbody">
      <div class="db1 w71"><div class="dic"><svg class="i26"><use href="#pagesetup"/></svg></div><div class="dl">Mise en<br>page</div></div>
    </div><div class="dlabel">Document</div></div>
    <i class="dsep"></i>
    <div class="dg d177"><div class="dbody">
      <div class="db1 w52"><div class="dic"><svg class="i28x26"><use href="#printgear"/></svg></div><div class="dl">Imprimer</div></div>
      <div class="db1 w56"><div class="dic"><svg class="i28x26"><use href="#printer"/></svg></div><div class="dl">Imprimer<br>directement</div></div>
      <i class="dsub"></i>
      <div class="db1 w62"><div class="dic"><svg class="i28x26"><use href="#pdf"/></svg></div><div class="dl">Exporter<br>vers Pdf <i class="caret"></i></div></div>
    </div><div class="dlabel">Impression</div></div>
    <i class="dsep"></i>
    <div class="dg d61"><div class="dbody">
      <div class="db1 w61"><div class="dic"><svg class="i21 mt2"><use href="#scale"/></svg></div><div class="dl">Echelle<br><i class="caret"></i></div></div>
    </div><div class="dlabel">Options</div></div>
    <i class="dsep"></i>
    <div class="dg d252"><div class="dbody">
      <div class="db1 w52"><div class="dic"><svg class="i18x16 mt6"><use href="#first"/></svg></div><div class="dl">Première<br>page</div></div>
      <div class="db1 w78"><div class="dic"><svg class="i12x16 mt6"><use href="#prev"/></svg></div><div class="dl">Page précédente</div></div>
      <div class="db1 w74"><div class="dic"><svg class="i12x16 mt6"><use href="#next"/></svg></div><div class="dl">Page suivante</div></div>
      <div class="db1 w42"><div class="dic"><svg class="i18x16 mt6"><use href="#last"/></svg></div><div class="dl">Dernière<br>page</div></div>
    </div><div class="dlabel">Navigation</div></div>
    <i class="dsep"></i>
    <div class="dg d172"><div class="dbody">
      <div class="tools">
        <span class="tool active"><svg class="s12"><use href="#cursor"/></svg></span>
        <span class="tool"><svg class="s12"><use href="#hand"/></svg></span>
        <span class="tool"><svg class="s12"><use href="#mag"/></svg></span>
      </div>
      <div class="db1 w48"><div class="dic"><svg class="i19x23"><use href="#pages"/></svg></div><div class="dl">Pages<br>multiples <i class="caret"></i></div></div>
      <div class="zooms">
        <div class="zr"><svg class="s12"><use href="#zout"/></svg>Zoom arrière</div>
        <div class="zr"><svg class="s12"><use href="#zo"/></svg>Zoom <i class="caret"></i></div>
        <div class="zr"><svg class="s12"><use href="#zin"/></svg>Zoom avant</div>
      </div>
    </div><div class="dlabel">Zoom</div></div>
    <i class="dsep"></i>
    <div class="dg d78"><div class="dbody">
      <div class="db1 w74"><div class="dic"><svg class="i20x18 mt5"><use href="#bucket"/></svg></div><div class="dl">Couleur<br>de fond <i class="caret"></i></div></div>
    </div><div class="dlabel dlp">Personaliser</div></div>
    <i class="dsep"></i>
    <div class="dg d57"><div class="dbody">
      <div class="db1 w57"><div class="dic"><svg class="i26x28 mtn2"><use href="#closeprev"/></svg></div><div class="dl">Fermer<br>l'aperçu</div></div>
    </div><div class="dlabel">Fermer</div></div>
    <i class="dsep"></i>
  </div>
  <div class="viewer">
    <div class="canvas">
      <div class="page">
        <div class="printarea">
          <div class="topmargin"></div>
          <h1 class="co">GestInnov SA</h1>
          <div class="addr">Av. de la Gare 66</div>
          <div class="addr">1920 Martigny</div>
          <h2 class="dtit">Détail des prestations</h2>
          <div class="acct">FriBer Sàrl / 180039 - Nouveau site usine</div>
          <div class="phase">Elaboration/pré-projet</div>
          <div class="lh hd"><b>Date</b><b>Tâche</b><b class="de">De</b><b class="a">A</b><b class="rt">Durée</b><b class="rt">Facturé</b><b class="rt">Tarif</b><b class="rt">Montant</b></div>
          <div class="lh"><span>03.01.2018</span><span>Séances</span><span class="tm">08h00 - 12h00</span><span class="rt">4.00h</span><span class="rt">4.00h</span><span class="rt">180.00</span><span class="rt">720.00</span></div>
          <div class="note">Rendez-vous pour discussion concernant<br>le pré-projet</div>
          <div class="lh two"><span>05.01.2018</span><span>Développement et<br>prestations au forfait</span><span class="tm">08h00 - 12h00</span><span class="rt">4.00h</span><span class="rt">4.00h</span><span class="rt">180.00</span><span class="rt">720.00</span></div>
          <div class="lh two"><span>08.01.2018</span><span>Développement et<br>prestations au forfait</span><span class="tm">10h00 - 12h00</span><span class="rt">2.00h</span><span class="rt">2.00h</span><span class="rt">180.00</span><span class="rt">360.00</span></div>
          <div class="lh two"><span>09.01.2018</span><span>Développement et<br>prestations au forfait</span><span class="tm">08h00 - 12h00</span><span class="rt">4.00h</span><span class="rt">4.00h</span><span class="rt">180.00</span><span class="rt">720.00</span></div>
          <div class="lh two"><span>09.01.2018</span><span>Développement et<br>prestations au forfait</span><span class="tm">13h00 - 17h00</span><span class="rt">4.00h</span><span class="rt">4.00h</span><span class="rt">180.00</span><span class="rt">720.00</span></div>
          <div class="lh two"><span>10.01.2018</span><span>Développement et<br>prestations au forfait</span><span class="tm">08h00 - 12h00</span><span class="rt">4.00h</span><span class="rt">4.00h</span><span class="rt">180.00</span><span class="rt">720.00</span></div>
          <div class="lh two"><span>10.01.2018</span><span>Développement et<br>prestations au forfait</span><span class="tm">13h00 - 17h00</span><span class="rt">4.00h</span><span class="rt">4.00h</span><span class="rt">180.00</span><span class="rt">720.00</span></div>
          <div class="lh two"><span>12.01.2018</span><span>Développement et<br>prestations au forfait</span><span class="tm">08h00 - 12h00</span><span class="rt">4.00h</span><span class="rt">4.00h</span><span class="rt">180.00</span><span class="rt">720.00</span></div>
        </div>
      </div>
      <div class="vscroll">
        <svg class="vchev" viewBox="0 0 10 6"><path d="M1 5l4-4 4 4" fill="none" stroke="#666" stroke-width="1.500"/></svg>
        <i class="thumb"></i>
        <svg class="vchev" viewBox="0 0 10 6"><path d="M1 1l4 4 4-4" fill="none" stroke="#666" stroke-width="1.500"/></svg>
      </div>
    </div>
    <div class="hscroll">
      <svg class="hchev" viewBox="0 0 6 10"><path d="M5 1L1 5l4 4" fill="none" stroke="#bbb" stroke-width="1.300"/></svg>
      <svg class="hchev" viewBox="0 0 6 10"><path d="M1 1l4 4-4 4" fill="none" stroke="#bbb" stroke-width="1.300"/></svg>
    </div>
  </div>
  <div class="dstatus">
    <span>Page 2 sur 4</span>
    <span class="zoomctl"><span class="pct">100%</span><span class="pm pmm">-</span><span class="slider"><i class="fill"></i><i class="knob"></i></span><span class="pm pmp">+</span><svg class="rgrip" viewBox="0 0 10 10"><path d="M8 1h2v2H8zM5 4h2v2H5zM8 4h2v2H8zM2 7h2v2H2zM5 7h2v2H5zM8 7h2v2H8z" fill="#777"/></svg></span>
  </div>
</div>
</body>
</html>
```
FILE: styles.css
```css
* { box-sizing: border-box; }
html, body { margin: 0; height: 100%; overflow: hidden; }
body { font: 11px/13px "Liberation Sans", Arial, sans-serif; color: #3c3c3c; background: #f0f0f0; }
i { display: block; font-style: normal; }
.sprite { width: 0; height: 0; position: absolute; }
svg { display: block; flex: none; overflow: hidden; }

.app { width: 1920px; height: 1040px; display: flex; flex-direction: column; }

/* title bar */
.titlebar { height: 53px; background: #0072c6; color: #fff; flex: none; }
.qrow { height: 32px; display: grid; grid-template-columns: 1fr auto 1fr; align-items: center; }
.qat { display: flex; align-items: center; padding-left: 4px; }
.q { display: flex; justify-content: center; }
.dim { color: #93acc4; }
.lit { color: #fff; }
.qsep { width: 1px; height: 20px; background: #b8cfe3; margin-left: 2px; }
.qsep.flat { margin-left: 0; }
.ml4 { margin-left: 4px; }
.ml8 { margin-left: 8px; }
.w19 { width: 19px; } .w24 { width: 24px; } .w26 { width: 26px; } .w28 { width: 28px; }
.w30 { width: 30px; } .w32 { width: 32px; } .w38 { width: 38px; } .w42 { width: 42px; }
.w46 { width: 46px; } .w48 { width: 48px; } .w50 { width: 50px; } .w52 { width: 52px; }
.w54 { width: 54px; } .w56 { width: 56px; } .w57 { width: 57px; } .w58 { width: 58px; }
.w60 { width: 60px; } .w61 { width: 61px; } .w62 { width: 62px; } .w64 { width: 64px; }
.w68 { width: 68px; } .w69 { width: 69px; } .w71 { width: 71px; } .w74 { width: 74px; }
.w78 { width: 78px; } .w84 { width: 84px; } .w88 { width: 88px; } .w110 { width: 110px; }
.w128 { width: 128px; }
.s12 { width: 12px; height: 12px; } .s14 { width: 16px; height: 16px; } .s18 { width: 18px; height: 18px; }
.caret { display: inline-block; width: 0; height: 0; border: 3px solid transparent; border-top-color: #333; border-bottom: 0; vertical-align: 2px; }
.caret.white { border-top-color: #fff; width: 6px; }
.caret.gray { border-top-color: #8a8a8a; }
.caret.dark { border-top-color: #555; border-width: 4px 4px 0; }
.apptitle { text-align: center; font-size: 11px; color: #eaf3fb; }
.winbtns { display: flex; justify-content: flex-end; color: #dbe9f5; }
.wb { width: 47.5px; height: 32px; display: flex; align-items: center; justify-content: center; }
.tabs { height: 21px; display: flex; align-items: stretch; position: relative; }
.tab { display: flex; align-items: center; justify-content: center; }
.t-file { width: 65px; }
.t-on { width: 59px; margin-left: 6px; background: #f0f0f0; color: #444; }
.t-view { width: 70px; }
.help { width: 14px; height: 14px; border-radius: 50%; background: #3f86c6; font: bold 11px/14px "Liberation Sans", sans-serif; text-align: center; color: #fff; margin: 4px 7px 0 auto; }

/* ribbon */
.ribbon { height: 93px; flex: none; background: #f0f0f0; border-bottom: 1px solid #c6c6c6; display: flex; }
.group { display: flex; flex-direction: column; height: 92px; }
.g368 { width: 368px; } .g170 { width: 170px; } .g1135 { width: 1135px; }
.gbody { height: 76px; display: flex; }
.pl8 { padding-left: 8px; }
.col { display: flex; flex-direction: column; }
.pad10 { padding-left: 10px; }
.pad9 { padding-left: 9px; }
.glabel { height: 14px; line-height: 14px; text-align: center; }
.gsep { width: 1px; height: 80px; margin-top: 6px; background: #d4d4d4; flex: none; }
.sep { width: 1px; height: 58px; margin-top: 8px; background: #cfcfcf; flex: none; }
.ml6 { margin-left: 6px; }
.rb { flex: none; padding-top: 7px; text-align: center; display: flex; flex-direction: column; align-items: center; }
.rb.off { color: #8f8f8f; }
.ic { height: 36px; flex: none; }
.ic.az { display: flex; width: 31px; }
.azl { width: 14px; display: flex; flex-direction: column; font: bold 18px/15px "Liberation Sans", sans-serif; }
.az-a { color: #3f78b5; }
.az-z { color: #c8452f; }
.i17x31 { width: 17px; height: 31px; }
.lb { line-height: 13px; white-space: nowrap; }
.lb .caret { vertical-align: 2px; }
.i30 { width: 30px; height: 30px; } .i31 { width: 31px; height: 31px; }
.i30x32 { width: 30px; height: 32px; } .i30x26 { width: 30px; height: 26px; } .i30x18 { width: 30px; height: 18px; }
.i30x31 { width: 30px; height: 31px; } .i32x30 { width: 32px; height: 30px; } .i33x28 { width: 33px; height: 28px; }
.i16x15 { width: 16px; height: 15px; }
.mt2 { margin-top: 2px; } .mt3 { margin-top: 3px; } .mt5 { margin-top: 5px; } .mt6 { margin-top: 6px; } .mt7 { margin-top: 7px; } .mtn2 { margin-top: -2px; }
.fieldcap { margin-top: 16px; height: 25px; line-height: 13px; white-space: nowrap; }
.muted { color: #9a9a9a; }
.combo { display: flex; height: 22px; border: 1px solid #a8a8a8; background: #fff; align-items: stretch; }
.cb150 { width: 150px; }
.cb100 { width: 100px; }
.dis { color: #9a9a9a; border-color: #c4c4c4; background: #f8f8f8; }
.cbtxt { flex: 1; line-height: 20px; padding-left: 3px; font-size: 11.5px; }
.cbtxt.ind { padding-left: 24px; }
.cbbtn { width: 16px; background: #f0f0f0; border-left: 1px solid #c4c4c4; display: flex; align-items: center; justify-content: center; }
.colorbox { display: flex; align-items: center; height: 60px; padding: 0 0 0 8px; margin-top: 8px; }
.colorlb { margin-left: 5px; width: 40px; }
.combo.cbcol { width: 50px; margin-left: 0; background: #f0f0f0; height: 23px; }
.swatch { flex: 1; background: #fff; display: flex; align-items: center; justify-content: center; }
.swatch i { width: 23px; height: 11px; border: 1px solid #333; background: #fff; }
.cbcol .cbbtn { width: 16px; }
.collapse { margin-left: auto; margin-top: 75px; margin-right: 9px; }

/* main */
.main { flex: 1; display: flex; min-height: 0; }
.left { width: 262px; flex: none; display: flex; flex-direction: column; }
.paneltitle { height: 32px; flex: none; font: bold 16px/30px "Liberation Sans", sans-serif; padding: 0 0 0 6px; color: #3c3c3c; }
.lefthead { display: flex; justify-content: space-between; align-items: center; padding-right: 8px; padding-bottom: 4px; line-height: normal; }
.chev { width: 9px; height: 12px; }
.tree { flex: 1; background: #fff; padding: 3px 0 0 5px; }
.tg { height: 18px; display: flex; align-items: center; font-weight: bold; font-size: 11.5px; color: #333; }
.tg svg { margin-right: 5px; }
.t16 { width: 16px; height: 16px; }
.ti { height: 18px; display: flex; align-items: center; padding-left: 20px; }
.ti svg { margin-right: 2px; }
.ti span { padding: 0 3px 0 1px; line-height: 18px; }
.ti.sel span { background: #efefef; }
.grip { height: 13px; flex: none; display: flex; justify-content: center; align-items: center; gap: 2px; }
.grip i { width: 2px; height: 2px; background: #666; }
.navitem { height: 42px; flex: none; display: flex; align-items: center; padding-left: 12px; font-size: 13.5px; color: #3c4650; }
.navitem.on { background: #d6d6d6; }
.navitem span { margin-left: 7px; }
.n22 { width: 22px; height: 22px; }
.navmore { height: 43px; flex: none; background: #e3e3e3; border-top: 1px solid #cfcfcf; display: flex; justify-content: flex-end; align-items: center; gap: 5px; padding-right: 11px; }
.navmore i { width: 4px; height: 4px; border-radius: 50%; background: #777; }
.split { width: 13px; flex: none; display: flex; flex-direction: column; align-items: center; justify-content: center; gap: 1px; padding-right: 2px; }
.split i { width: 2px; height: 2px; background: #555; }

.content { flex: 1; min-width: 0; display: flex; flex-direction: column; }
.panel { height: 814px; flex: none; margin: 0 3px 0 1px; border: 1px solid #a6a6a6; background: #f0f0f0; display: flex; flex-direction: column; }
.grouppane { height: 33px; flex: none; padding: 11px 0 0 5px; line-height: 13px; color: #a4a4a4; background: linear-gradient(#f8f8f8, #efefef); }
.row { display: grid; grid-template-columns: 123px 219px 90px 108px 109px 165px 110px 120px 155px 121px 188px 131px; }
.head { height: 21px; flex: none; background: #f0f0f0; border-top: 1px solid #a0a0a0; border-bottom: 1px solid #a0a0a0; }
.c { padding: 0 0 0 4px; line-height: 19px; border-right: 1px solid #c2c2c2; white-space: nowrap; overflow: hidden; display: flex; justify-content: space-between; align-items: center; }
.c.first { padding-left: 5px; }
.sorted .caret { margin-right: 6px; border-width: 4px 4px 0; vertical-align: 0; }
.rows { flex: 1; background: #fff; overflow: hidden; }
.r { height: 19px; line-height: 18px; }
.r span { border-bottom: 1px solid #dcdcdc; white-space: nowrap; overflow: hidden; }
.t { padding-left: 5px; }
.t.m { padding-left: 7px; }
.n { text-align: right; padding-right: 4px; }
.selrow { background: #e2eff8; }
.bg { background: #dcdcdc; }
.ob { background: #ffdfbf; }
.rd { background: #ffbfbf; }
.yl { background: #ffffbf; }
.foot { height: 31px; flex: none; background: #f0f0f0; border-top: 1px solid #a6a6a6; padding-top: 3px; }
.fc { height: 24px; margin-left: 2px; border: 1px solid #a6a6a6; background: #fff; text-align: right; padding-right: 6px; line-height: 22px; font-size: 11.5px; white-space: nowrap; overflow: hidden; }
.fc.spanleft { grid-column: 1 / 9; }
.fc.tight { padding-right: 4px; }
.lastf { margin-right: 2px; }
.bottomtabs { display: flex; height: 25px; flex: none; margin-left: 1px; }
.btab { padding: 0 8px; line-height: 23px; width: 45px; text-align: center; }
.btab.on { background: #fafafa; border: 1px solid #b8b8b8; border-top: 0; height: 24px; }
.btab:not(.on) { width: auto; margin-left: 1px; }

.status { height: 23px; flex: none; border-top: 1px solid #c2c2c2; background: #f0f0f0; display: flex; justify-content: space-between; align-items: center; padding: 0 8px 0 6px; font-size: 11.5px; }
.connected { display: flex; align-items: center; font-size: 11px; }
.db { width: 13px; height: 15px; margin-right: 13px; }

/* dialog window */
.dialog { position: absolute; left: 484px; top: 418px; width: 955px; height: 580px; border: 1px solid #0072c6; background: #f0f0f0; display: flex; flex-direction: column; font-size: 9.5px; box-shadow: 0 0 6px rgba(0,0,0,.15); }
.dtitle { height: 27px; flex: none; background: #0072c6; color: #fff; display: grid; grid-template-columns: 1fr auto 1fr; align-items: center; font-size: 9.5px; padding-bottom: 2px; }
.dtl { padding-left: 7px; }
.dico { width: 12px; height: 14px; }
.dname { color: #e6f1fa; }
.dtr { display: flex; justify-content: flex-end; color: #cde0f0; }
.dwb { width: 41.500px; display: flex; justify-content: center; }
.pinic { width: 12px; height: 10px; }
.dribbon { height: 80px; flex: none; display: flex; border-bottom: 1px solid #cfcfcf; }
.dg { display: flex; flex-direction: column; }
.d71 { width: 71px; } .d177 { width: 177px; } .d61 { width: 61px; } .d252 { width: 252px; } .d172 { width: 172px; } .d78 { width: 78px; } .d57 { width: 57px; }
.dbody { height: 66px; display: flex; }
.dlabel { height: 12px; line-height: 12px; text-align: center; white-space: nowrap; }
.dlp { padding-right: 4px; }
.dsep { width: 1px; height: 70px; margin-top: 5px; background: #d2d2d2; flex: none; }
.dsub { width: 1px; height: 52px; margin-top: 4px; margin-left: 5px; background: #d2d2d2; flex: none; }
.db1 { flex: none; padding-top: 6px; text-align: center; display: flex; flex-direction: column; align-items: center; }
.dic { height: 29px; flex: none; }
.dl { line-height: 12px; white-space: nowrap; }
.i26 { width: 26px; height: 26px; } .i28x26 { width: 28px; height: 26px; } .i21 { width: 21px; height: 21px; }
.i18x16 { width: 18px; height: 16px; } .i12x16 { width: 12px; height: 16px; } .i19x23 { width: 19px; height: 23px; }
.i20x18 { width: 20px; height: 18px; } .i26x28 { width: 26px; height: 28px; }
.tools { width: 32px; padding: 3px 0 0 4px; display: flex; flex-direction: column; flex: none; }
.tool { width: 24px; height: 19px; display: flex; align-items: center; justify-content: center; }
.tool.active { background: #c3c3c3; }
.zooms { padding: 3px 0 0 12px; }
.zr { display: flex; align-items: center; height: 19px; white-space: nowrap; gap: 5px; }

.viewer { flex: 1; min-height: 0; display: flex; flex-direction: column; background: #e5e5e5; }
.canvas { flex: 1; min-height: 0; display: flex; overflow: hidden; }
.page { width: 690px; margin-left: 124px; background: #fff; border-right: 1px solid #b0b0b0; flex: none; padding: 0 33px 0 34px; height: 700px; }
.printarea { height: 100%; border-left: 1px dashed #a8a8a8; border-right: 1px dashed #a8a8a8; font: 9.5px/12px "DejaVu Sans", sans-serif; color: #333; }
.topmargin { height: 31px; margin: 0 -34px; border-bottom: 1px dashed #b0b0b0; }
.co { margin: 15px 0 0 8px; font: bold 16.5px/20px "DejaVu Sans", sans-serif; color: #111; }
.addr { margin-left: 8px; height: 14px; line-height: 14px; }
.dtit { margin: 39.500px 0 0 8px; height: 24px; font: bold 16.5px/24px "DejaVu Sans", sans-serif; word-spacing: -3px; color: #111; }
.dtit::after { content: ""; display: block; height: 1px; background: #222; margin: 5px -5px 0 -2px; width: 610px; }
.acct { margin: 14px 0 0 8px; font: italic bold 9.5px/12px "DejaVu Sans", sans-serif; color: #222; }
.phase { margin: 5px 0 0 8px; font: italic 11px/12px "Liberation Sans", sans-serif; }
.lh { display: grid; grid-template-columns: 70px 124px 44px 36px 70px 70px 62px 74px; margin: 0 0 0 22px; line-height: 13px; white-space: nowrap; }
.lh.hd { margin-top: 9px; height: 13px; color: #111; }
.lh.hd .de { grid-column: 3; }
.lh.hd .a { grid-column: 4; }
.lh .tm { grid-column: 3 / 5; }
.rt { text-align: right; }
.note { margin: 1px 0 0 92px; font: italic 10.5px/12px "Liberation Sans", sans-serif; height: 25px; }
.lh.two { height: 25px; line-height: 12px; }
.lh.two span:nth-child(2) { letter-spacing: -.25px; }

.vscroll { margin-left: auto; display: flex; flex-direction: column; align-items: center; justify-content: space-between; background: #e9e9e9; padding: 5px 0; position: relative; width: 14px; }
.vchev { width: 9px; height: 6px; }
.thumb { position: absolute; left: 0; top: 121px; width: 13px; height: 46px; background: #c8c8c8; }
.hscroll { height: 15px; flex: none; background: #e9e9e9; display: flex; justify-content: space-between; align-items: center; padding: 0 20px 0 3px; border-bottom: 1px solid #c8c8c8; }
.hchev { width: 6px; height: 10px; }
.dstatus { height: 17px; flex: none; display: flex; justify-content: space-between; align-items: center; padding-left: 5px; }
.zoomctl { display: flex; align-items: center; }
.pct { margin-right: 11px; }
.pm { width: 10px; text-align: center; color: #666; font-size: 11px; }
.pmm { margin-right: 5px; }
.pmp { margin-left: 3px; }
.slider { width: 90px; height: 2px; background: #b8b8b8; position: relative; }
.fill { width: 44px; height: 2px; background: #0072c6; }
.knob { position: absolute; left: 44px; top: -4px; width: 2px; height: 10px; background: #777; }
.rgrip { width: 10px; height: 10px; margin: 5px 0 0 14px; }
```
